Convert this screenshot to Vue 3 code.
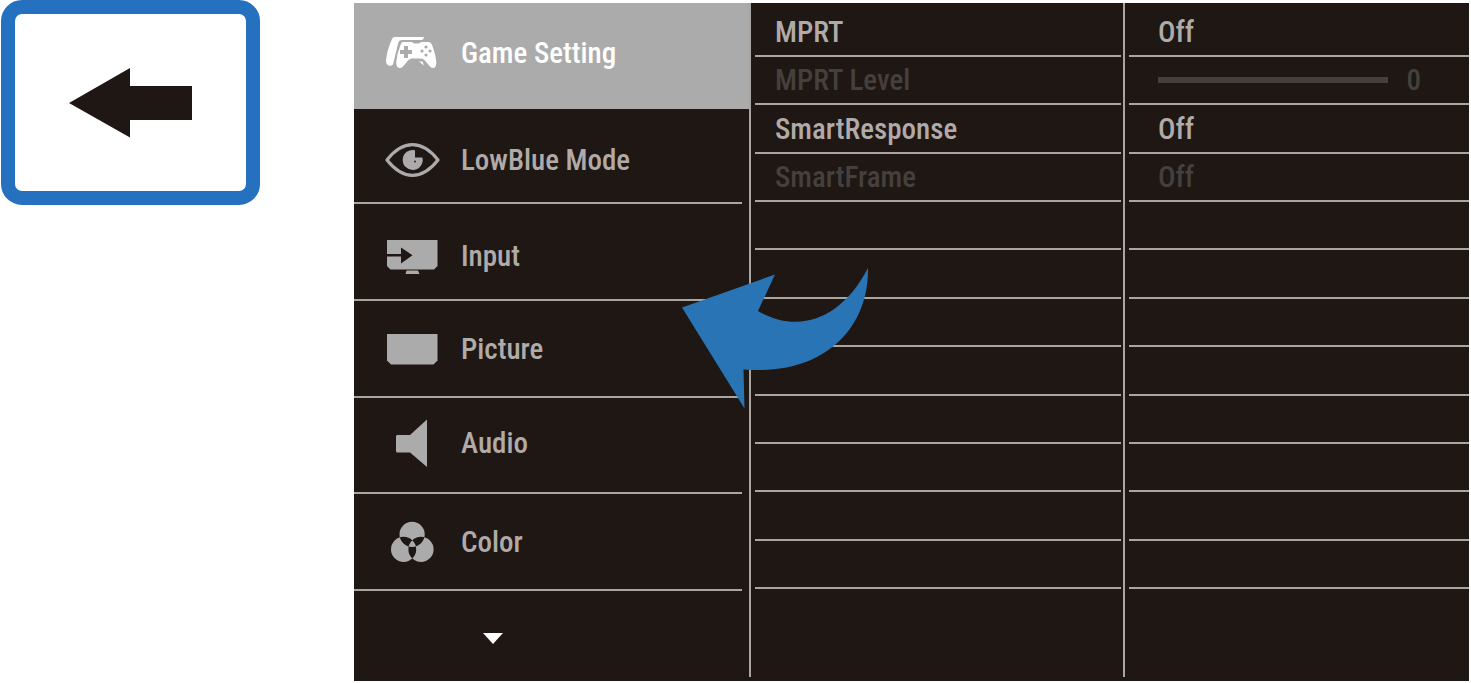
<script setup>
const menu = [
  { id: 'game', label: 'Game Setting', size: 'active' },
  { id: 'blue', label: 'LowBlue Mode', size: 'low' },
  { id: 'input', label: 'Input', size: 'low' },
  { id: 'picture', label: 'Picture', size: '' },
  { id: 'audio', label: 'Audio', size: 'high' },
  { id: 'color', label: 'Color', size: '' }
]

const settings = [
  { label: 'MPRT', value: 'Off' },
  { label: 'MPRT Level', level: 0, disabled: true },
  { label: 'SmartResponse', value: 'Off' },
  { label: 'SmartFrame', value: 'Off', disabled: true },
  ...Array.from({ length: 8 }, () => ({}))
]
</script>

<template>
  <main class="page">
    <button class="key" type="button" aria-label="Left">
      <svg width="124" height="70" viewBox="69 68 124 70">
        <path d="M69 103 130 68V86H192V120H130V137.500Z" fill="#1f1713" />
      </svg>
    </button>

    <section class="panel">
      <nav class="menu">
        <button v-for="item in menu" :key="item.id" type="button" class="item" :class="item.size">
          <svg class="icon" width="56" height="50" viewBox="0 0 56 50" fill="currentColor">
            <template v-if="item.id === 'game'">
              <path d="M9.500 9H39Q38.500 11.500 37 12H17Q14 12 13.200 15L8 36.500Q6.500 38 4.500 37.800Q1 37 1 32.500Q2 22 7 11Q7.800 9 9.500 9Z" />
              <path
                fill-rule="evenodd"
                d="M18 14H27L29 15.500H34L36 14H43Q46 14 47 17Q51 27 51.300 35Q51 40 48 40Q46 40 44.500 38L39.500 32Q38 30.500 36 30.500H27Q25 30.500 23.500 32L18 38.500Q16.500 40 14.500 40Q11 39.500 11.200 34Q12 26 15.500 17Q16.300 14 18 14ZM19 18V22H15V26H19V30H23V26H27V22H23V18Z"
              />
              <path d="M34 33.500H37.500L39 37.500Z" />
              <g fill="#ababab">
                <circle cx="41" cy="19" r="1.600" />
                <circle cx="41" cy="27" r="1.600" />
                <circle cx="37" cy="23" r="1.600" />
                <circle cx="45" cy="23" r="1.600" />
              </g>
            </template>
            <template v-else-if="item.id === 'blue'">
              <path
                d="M2 25Q14 9.700 27.500 9.700Q41 9.700 53 25Q41 40.300 27.500 40.300Q14 40.300 2 25Z"
                fill="none"
                stroke="currentColor"
                stroke-width="3.200"
                stroke-linejoin="round"
              />
              <path d="M30 15.200V22.500H37.400A10 10 0 1 1 30 15.200Z" />
              <circle cx="30" cy="26.500" r="0.900" fill="#1f1713" />
            </template>
            <template v-else-if="item.id === 'input'">
              <path d="M2 9H52.500V35L49 38.500H5.500L2 35V25.500H16V32.500L27.500 24.300L16 16.500V23H2Z" />
              <path d="M21.500 39.500H33L34.500 43H20.500Z" />
            </template>
            <path v-else-if="item.id === 'picture'" d="M2 10H52.500V36.500L48.500 40.500H6L2 36.500Z" />
            <path v-else-if="item.id === 'audio'" d="M12 17H25L42 1.500V49L25 34.500H12L11 33.500V18Z" />
            <path
              v-else
              fill-rule="evenodd"
              d="M14.500 17.300a12.600 12.600 0 1 0 25.200 0a12.600 12.600 0 1 0 -25.200 0ZM6 32.400a12.600 12.600 0 1 0 25.200 0a12.600 12.600 0 1 0 -25.200 0ZM23.400 32.400a12.600 12.600 0 1 0 25.200 0a12.600 12.600 0 1 0 -25.200 0Z"
            />
          </svg>
          <span>{{ item.label }}</span>
        </button>
        <button class="more" type="button" aria-label="More">
          <svg width="20" height="11" viewBox="0 0 20 11"><path d="M0 0H20L10 11Z" fill="#fff" /></svg>
        </button>
      </nav>

      <div class="column names">
        <div v-for="(row, i) in settings" :key="i" class="cell" :class="{ disabled: row.disabled }">
          <label v-if="row.level !== undefined" for="level">{{ row.label }}</label>
          <span v-else>{{ row.label }}</span>
        </div>
      </div>

      <div class="column values">
        <div v-for="(row, i) in settings" :key="i" class="cell" :class="{ disabled: row.disabled }">
          <template v-if="row.level !== undefined">
            <input id="level" class="slider" type="range" min="0" max="20" :value="row.level" disabled />
            <output for="level">{{ row.level }}</output>
          </template>
          <span v-else>{{ row.value }}</span>
        </div>
      </div>

      <svg class="swoosh" width="187" height="141" viewBox="682 268 187 141" aria-hidden="true">
        <path d="M682 307.500 775 274.500 758 311C800 335 842 318 868 268C869 330 822 376 743.500 369.500L744.500 408.500Z" fill="#2874b5" />
      </svg>
    </section>
  </main>
</template>

<style>
body {
  margin: 0;
  background: #fff;
}
</style>

<style scoped>
.page {
  display: flex;
  align-items: flex-start;
  gap: 94px;
  padding: 0 2px 2px 1px;
  font: 500 29px/32px "Roboto Condensed", Roboto, "Liberation Sans", sans-serif;
  color: #b0aba9;
}

button {
  font: inherit;
  color: inherit;
  border: 0;
  margin: 0;
  padding: 0;
  background: none;
  text-align: left;
}

.key {
  box-sizing: border-box;
  flex: none;
  display: flex;
  align-items: center;
  justify-content: center;
  width: 259px;
  height: 205px;
  border: 14px solid #2571c0;
  border-radius: 21px;
  background: #fff;
}

.panel {
  position: relative;
  flex: 1;
  min-width: 0;
  margin-top: 3px;
  display: grid;
  grid-template-columns: 395fr 374fr 346fr;
  min-height: 678px;
  background: #1f1713;
}

.menu {
  display: grid;
  grid-template-rows: 106px 95px 97px 97px 96px 97px 1fr;
}

.item {
  box-sizing: border-box;
  display: flex;
  align-items: center;
  gap: 20px;
  margin-right: 7px;
  padding-left: 31px;
  border-bottom: 2px solid #aba5a2;
}

.item.active {
  margin-right: 0;
  padding-bottom: 6px;
  border-bottom: 0;
  background: #ababab;
  color: #fff;
}

.item.low {
  padding-top: 8px;
}

.item.high {
  padding-bottom: 4px;
}

.icon {
  flex: none;
  color: #ababab;
}

.active .icon {
  color: #fff;
}

.more {
  display: flex;
  align-items: center;
  padding: 4px 0 0 129px;
}

.column {
  display: grid;
  grid-template-rows: 54px repeat(11, 1fr) 88px;
  margin-bottom: 4px;
  border-left: 2px solid #aba5a2;
  padding-left: 4px;
}

.names {
  padding-right: 2px;
}

.cell {
  box-sizing: border-box;
  display: flex;
  align-items: center;
  border-bottom: 2px solid #aba5a2;
}

.names .cell {
  padding-left: 20px;
}

.values .cell {
  gap: 19px;
  padding: 0 48px 0 29px;
}

.column .cell:first-child {
  padding-top: 6px;
}

.disabled {
  color: #45403d;
}

.slider {
  appearance: none;
  flex: 1;
  min-width: 0;
  height: 6px;
  margin: 0;
  background: #45403d;
}

.slider::-webkit-slider-thumb {
  appearance: none;
  width: 0;
  height: 0;
}

.swoosh {
  position: absolute;
  left: 29.4%;
  top: 265px;
}
</style>
